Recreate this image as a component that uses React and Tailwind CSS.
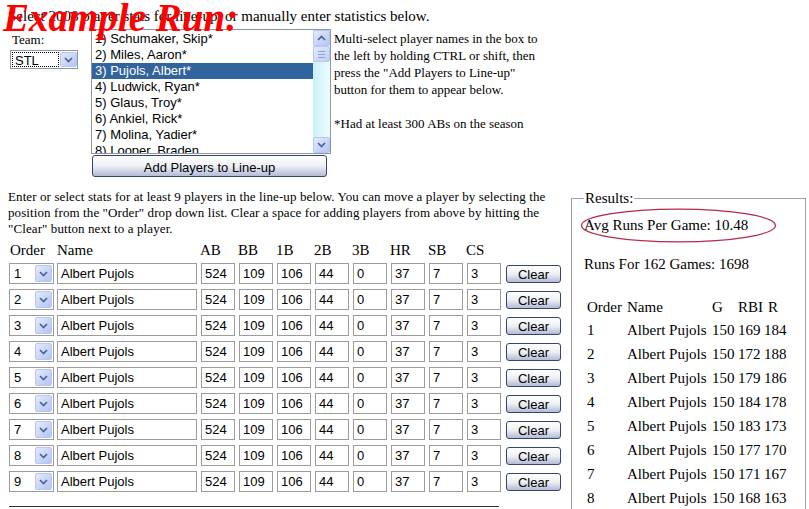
import React from "react";

const players = [
  "1) Schumaker, Skip*",
  "2) Miles, Aaron*",
  "3) Pujols, Albert*",
  "4) Ludwick, Ryan*",
  "5) Glaus, Troy*",
  "6) Ankiel, Rick*",
  "7) Molina, Yadier*",
  "8) Looper, Braden",
];

const stats = ["524", "109", "106", "44", "0", "37", "7", "3"];
const statHeads = ["AB", "BB", "1B", "2B", "3B", "HR", "SB", "CS"];

const results = [
  [1, 169, 184],
  [2, 172, 188],
  [3, 179, 186],
  [4, 184, 178],
  [5, 183, 173],
  [6, 177, 170],
  [7, 171, 167],
  [8, 168, 163],
];

const sans = "font-['Liberation_Sans',Arial,sans-serif]";

// xp style scroll / dropdown arrow button
function XpArrow({ up = false, className = "" }) {
  return (
    <div
      className={
        "flex items-center justify-center rounded-[2px] border border-[#b7c6f2] bg-gradient-to-br from-[#e4ebfe] to-[#b4c3f3] " +
        className
      }
    >
      <svg width="9" height="6" viewBox="0 0 9 6" fill="none">
        <path
          d={up ? "M1 5L4.5 1.5L8 5" : "M1 1L4.5 4.5L8 1"}
          stroke="#4d6193"
          strokeWidth="1.7"
        />
      </svg>
    </div>
  );
}

function XpButton({ children, className = "" }) {
  return (
    <div
      className={
        "flex items-center justify-center rounded-[3px] border border-[#34466e] bg-gradient-to-b from-white via-[#eef0f5] to-[#b3bbd5] pt-[2px] text-[13px] leading-none " +
        sans +
        " " +
        className
      }
    >
      {children}
    </div>
  );
}

function OrderSelect({ value }) {
  return (
    <div className={"flex h-[21px] w-[45px] border border-[#9c9c9c] bg-white text-[13px] " + sans}>
      <span className="flex-1 pl-[4px] leading-[19px]">{value}</span>
      <XpArrow className="my-px mr-px w-[17px]" />
    </div>
  );
}

function Box({ value, className = "" }) {
  return (
    <div
      className={
        "h-[21px] border border-[#9c9c9c] bg-white pl-[3px] text-[13px] leading-[19px] " + sans + " " + className
      }
    >
      {value}
    </div>
  );
}

export default function App() {
  return (
    <div className="relative h-[509px] w-[809px] overflow-hidden bg-white font-['Liberation_Serif','Times_New_Roman',serif] text-black">
      <div className="whitespace-nowrap pl-2 pt-2 text-[15px] leading-4">
        Select 2008 player stats for line-up, or manually enter statistics below.
      </div>

      <div className="mt-[5px] flex">
        <div className="w-[91px] pl-[10px]">
          <div className="pl-[2px] pt-[3px] text-[13px] leading-4">Team:</div>
          <div className={"mt-[2px] flex h-[19px] w-[68px] border border-[#8f96a3] bg-white text-[13px] " + sans}>
            <div className="m-px w-[48px] border border-dotted border-black pl-[2px] leading-[15px]">STL</div>
            <XpArrow className="my-px w-[17px]" />
          </div>
        </div>

        <div className="w-[240px]">
          <div className={"flex h-[125px] border border-[#8f96a3] bg-white text-[13px] " + sans}>
            <div className="flex-1 overflow-hidden pt-px">
              {players.map((p, i) => (
                <div
                  key={p}
                  className={
                    i === 2
                      ? "h-4 whitespace-nowrap bg-[#31639c] pl-[3px] leading-4 text-white"
                      : "h-4 whitespace-nowrap pl-[3px] leading-4"
                  }
                >
                  {p}
                </div>
              ))}
            </div>
            <div className="flex w-[17px] flex-col bg-gradient-to-r from-[#c9f0fa] to-[#effcff]">
              <XpArrow up className="h-[16px]" />
              <div className="flex h-[16px] flex-col items-center justify-center gap-[2px] rounded-[2px] border border-[#b7c6f2] bg-gradient-to-br from-[#e4ebfe] to-[#c0cdf6]">
                <div className="h-px w-[7px] bg-[#8e9fd0]" />
                <div className="h-px w-[7px] bg-[#8e9fd0]" />
                <div className="h-px w-[7px] bg-[#8e9fd0]" />
              </div>
              <div className="flex-1" />
              <XpArrow className="h-[16px]" />
            </div>
          </div>
          <XpButton className="ml-px mt-px h-[22px] w-[235px]">Add Players to Line-up</XpButton>
        </div>

        <div className="whitespace-nowrap pl-[3px] pt-px text-[13px] leading-[17px]">
          Multi-select player names in the box to
          <br />
          the left by holding CTRL or shift, then
          <br />
          press the "Add Players to Line-up"
          <br />
          button for them to appear below.
          <br />
          <br />
          *Had at least 300 ABs on the season
        </div>
      </div>

      <div className="mt-[12px] flex">
        <div className="w-[571px]">
          <p className="whitespace-nowrap pl-2 text-[13px] leading-4 tracking-[0.1px]">
            Enter or select stats for at least 9 players in the line-up below. You can move a player by selecting the
            <br />
            position from the "Order" drop down list. Clear a space for adding players from above by hitting the
            <br />
            "Clear" button next to a player.
          </p>

          <div className="mt-[4px] flex pl-[9px] text-[15px] leading-[18px]">
            <div className="w-[47px] pl-px">Order</div>
            <div className="w-[143px] pl-px">Name</div>
            {statHeads.map((h) => (
              <div key={h} className="w-[38px] pl-px">
                {h}
              </div>
            ))}
          </div>

          <div className="mt-[4px] flex flex-col gap-[5px] pl-[9px]">
            {[1, 2, 3, 4, 5, 6, 7, 8, 9].map((n) => (
              <div key={n} className="flex items-center">
                <OrderSelect value={n} />
                <Box value="Albert Pujols" className="ml-[3px] w-[140px]" />
                {stats.map((s, i) => (
                  <Box key={i} value={s} className="ml-[4px] w-[34px]" />
                ))}
                <XpButton className="ml-[5px] h-[18px] w-[55px]">Clear</XpButton>
              </div>
            ))}
          </div>

          <div className="ml-[9px] mt-[14px] w-[490px] border-t border-[#333]" />
        </div>

        <fieldset className="h-[340px] w-[235px] border border-[#a0a0a0] px-[12px] text-[15px] leading-[18px]">
          <legend className="px-px">Results:</legend>
          <div className="mt-[9px] whitespace-nowrap">Avg Runs Per Game: 10.48</div>
          <div className="mt-[21px] whitespace-nowrap">Runs For 162 Games: 1698</div>

          <div className="mt-[22px] flex h-[23px] items-center whitespace-nowrap">
            <div className="w-[43px] pl-[3px]">Order</div>
            <div className="w-[85px]">Name</div>
            <div className="w-[26px]">G</div>
            <div className="w-[26px]">RBI</div>
            <div className="pl-[4px]">R</div>
          </div>
          {results.map(([n, rbi, r]) => (
            <div key={n} className="flex h-[24px] items-center whitespace-nowrap">
              <div className="w-[43px] pl-[3px]">{n}</div>
              <div className="w-[85px]">Albert Pujols</div>
              <div className="w-[26px]">150</div>
              <div className="w-[26px]">{rbi}</div>
              <div>{r}</div>
            </div>
          ))}
        </fieldset>
      </div>

      {/* annotation overlays */}
      <div className="absolute left-[3px] top-[-1px] whitespace-nowrap text-[39px] font-bold italic leading-[38px] text-[#ff0000]">
        Example Run:
      </div>
      <svg className="absolute left-[580px] top-[208px]" width="197" height="35" viewBox="0 0 197 35" fill="none">
        <ellipse cx="98.5" cy="17.5" rx="97" ry="16.3" stroke="#b42a4c" strokeWidth="1.3" />
      </svg>
    </div>
  );
}
